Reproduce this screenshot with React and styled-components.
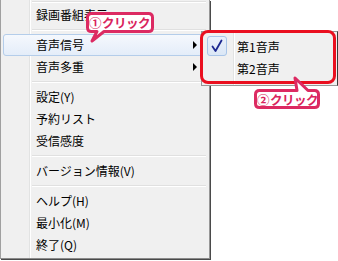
import React from "react";
import styled, { createGlobalStyle } from "styled-components";

const Global = createGlobalStyle`
  html, body { margin: 0; padding: 0; background: #fff; }
  body { font-family: "Noto Sans CJK JP", "Noto Sans", sans-serif; }
`;

const Page = styled.div`
  position: relative;
  width: 338px;
  height: 261px;
  overflow: hidden;
  background: #fff;
`;

const Menu = styled.div`
  box-sizing: border-box;
  width: 210px;
  display: flex;
  flex-direction: column;
  padding: 0 3px 2px 2px;
  border-left: 1px solid #a0a0a0;
  border-right: 1px solid #979797;
  border-bottom: 1px solid #8a8a8a;
  box-shadow: 1px 1px 0 #4a4a4a;
  background: linear-gradient(
    to right,
    #f0f0f0 28px,
    #e2e3e3 28px,
    #e2e3e3 29px,
    #ffffff 29px,
    #ffffff 30px,
    #f0f0f0 30px
  );
`;

const Item = styled.div`
  box-sizing: border-box;
  height: 22px;
  display: flex;
  align-items: center;
  justify-content: space-between;
  padding: 0 8px 0 32px;
  border: 1px solid ${(p) => (p.$active ? "#b4cdea" : "transparent")};
  border-radius: 3px;
  background: ${(p) =>
    p.$active ? "linear-gradient(#f5f8fd, #e4edf9)" : "transparent"};
  font-size: 12px;
  line-height: 20px;
  color: #000;
  white-space: nowrap;
`;

const Arrow = styled.span`
  width: 0;
  height: 0;
  border-left: 4px solid #000;
  border-top: 4px solid transparent;
  border-bottom: 4px solid transparent;
`;

const Separator = styled.div`
  height: ${(p) => (p.$short ? 4 : 8)}px;
  margin-left: 29px;
  display: flex;
  flex-direction: column;
  justify-content: center;
  &::after {
    content: "";
    height: 0;
    border-top: 1px solid #e0e0e0;
    border-bottom: 1px solid #ffffff;
  }
`;

const SubMenu = styled.div`
  position: absolute;
  left: 201px;
  top: 31px;
  box-sizing: border-box;
  width: 137px;
  height: 55px;
  padding: 3px 2px;
  display: flex;
  flex-direction: column;
  border: 1px solid #979797;
  border-right-color: #3a3a3a;
  background: linear-gradient(
    to right,
    #f0f0f0 31px,
    #e2e3e3 31px,
    #e2e3e3 32px,
    #ffffff 32px,
    #ffffff 33px,
    #f0f0f0 33px
  );
`;

const SubItem = styled.div`
  height: 22px;
  display: flex;
  align-items: center;
  font-size: 12px;
  color: #000;
  white-space: nowrap;
`;

const CheckBox = styled.div`
  box-sizing: border-box;
  width: 20px;
  height: 20px;
  margin: 0 10px 0 3px;
  border: 1px solid ${(p) => (p.$on ? "#a9c5e8" : "transparent")};
  border-radius: 3px;
  background: ${(p) => (p.$on ? "linear-gradient(#eaf1fb, #dbe7f6)" : "transparent")};
  display: flex;
  align-items: center;
  justify-content: center;
`;

const RedFrame = styled.div`
  position: absolute;
  left: 200px;
  top: 30px;
  box-sizing: border-box;
  width: 136px;
  height: 54px;
  border: 3px solid #ea0f1f;
  border-radius: 8px;
`;

const Callout = styled.div`
  position: absolute;
  left: ${(p) => p.$x}px;
  top: ${(p) => p.$y}px;
  width: ${(p) => p.$w}px;
  height: ${(p) => p.$h}px;
`;

const BubbleSvg = styled.svg`
  position: absolute;
  left: 0;
  top: 0;
`;

const CalloutLabel = styled.div`
  position: relative;
  margin-top: ${(p) => p.$top}px;
  padding-left: 5px;
  height: 20px;
  display: flex;
  align-items: center;
  font-size: 12.5px;
  font-weight: 700;
  letter-spacing: -0.5px;
  color: #d9235d;
  white-space: nowrap;
`;

const Num = styled.span`
  margin-right: 1px;
`;

const PINK = "#dc2a62";

function Bubble({ x, y, w, h, d, top, num, children }) {
  return (
    <Callout $x={x} $y={y} $w={w} $h={h}>
      <BubbleSvg width={w} height={h} viewBox={`0 0 ${w} ${h}`}>
        <path d={d} fill="#fff" stroke={PINK} strokeWidth="3" strokeLinejoin="round" />
      </BubbleSvg>
      <CalloutLabel $top={top}>
        <Num>{num}</Num>
        {children}
      </CalloutLabel>
    </Callout>
  );
}

export default function App() {
  return (
    <>
      <Global />
      <Page>
        <Menu>
          <Separator $short />
          <Item>録画番組表示</Item>
          <Separator />
          <Item $active>
            音声信号
            <Arrow />
          </Item>
          <Item>
            音声多重
            <Arrow />
          </Item>
          <Separator />
          <Item>設定(Y)</Item>
          <Item>予約リスト</Item>
          <Item>受信感度</Item>
          <Separator />
          <Item>バージョン情報(V)</Item>
          <Separator />
          <Item>ヘルプ(H)</Item>
          <Item>最小化(M)</Item>
          <Item>終了(Q)</Item>
        </Menu>

        <SubMenu>
          <SubItem>
            <CheckBox $on>
              <svg width="12" height="14" viewBox="0 0 12 14">
                <path d="M1.5 7.5 L4.5 12 L10.5 1.5" fill="none" stroke="#1c2890" strokeWidth="1.8" strokeLinecap="round" strokeLinejoin="round" />
              </svg>
            </CheckBox>
            第1音声
          </SubItem>
          <SubItem>
            <CheckBox />
            第2音声
          </SubItem>
        </SubMenu>

        <RedFrame />

        <Bubble
          x={84}
          y={10}
          w={74}
          h={36}
          top={2}
          num="①"
          d="M7.5 3.5 H64.5 Q68.5 3.5 68.5 7.5 V17.5 Q68.5 21.5 64.5 21.5 H20 L8 31 L13 21.5 H7.5 Q3.5 21.5 3.5 17.5 V7.5 Q3.5 3.5 7.5 3.5 Z"
        >
          クリック
        </Bubble>

        <Bubble
          x={252}
          y={75}
          w={72}
          h={37}
          top={14}
          num="②"
          d="M7.5 15.5 H45 L43 3 L56 15.5 H62.5 Q66.5 15.5 66.5 19.5 V28.5 Q66.5 32.5 62.5 32.5 H7.5 Q3.5 32.5 3.5 28.5 V19.5 Q3.5 15.5 7.5 15.5 Z"
        >
          クリック
        </Bubble>
      </Page>
    </>
  );
}
